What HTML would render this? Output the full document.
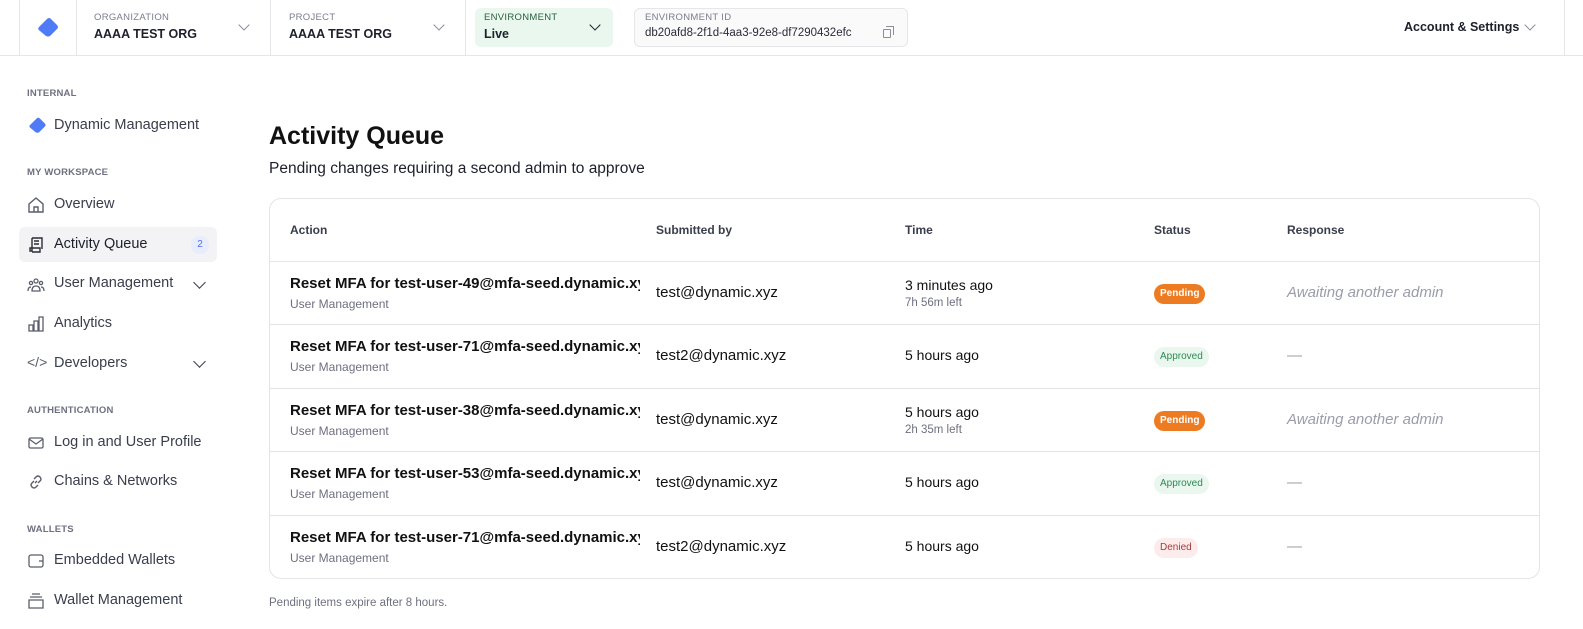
<!DOCTYPE html>
<html><head><meta charset="utf-8"><style>
*{box-sizing:border-box;margin:0;padding:0}
body{width:1583px;height:629px;overflow:hidden;background:#fff;font-family:"Liberation Sans",sans-serif;color:#111;position:relative}
.hdr{position:absolute;left:0;top:0;width:1583px;height:56px;border-bottom:1px solid #e6e6ea}
.vl{position:absolute;top:0;height:56px;width:1px;background:#e6e6ea}
.lbl{position:absolute;font-size:9.5px;color:#7a7d8c;letter-spacing:.3px}
.val{position:absolute;font-size:12.5px;font-weight:bold;color:#1d1f2b}
.chev{position:absolute;width:8px;height:8px;border-right:1.5px solid #8a8d9a;border-bottom:1.5px solid #8a8d9a;transform:rotate(45deg)}
.side{position:absolute;left:0;top:56px;width:240px}
.sec{position:absolute;left:27px;font-size:9.5px;font-weight:bold;color:#6e7080;letter-spacing:.2px}
.it{position:absolute;left:54px;font-size:14.5px;color:#3a3d4c}
.ic{position:absolute;left:27px;width:18px;height:18px}
.main h1{position:absolute;left:269px;top:122px;font-size:25px;font-weight:bold;color:#111}
.sub{position:absolute;left:269px;top:160px;font-size:15.5px;color:#1d1f2b}
.tbl{position:absolute;left:269px;top:198px;width:1271px;height:381px;border:1px solid #e4e4e8;border-radius:12px;overflow:hidden}
.th{position:absolute;top:24px;font-size:12px;font-weight:bold;color:#3a3d4c}
.row{position:absolute;left:0;width:1271px;height:63px;border-top:1px solid #e4e4e8}
.a{position:absolute;left:20px;top:13px;width:350px;overflow:hidden;white-space:nowrap;font-size:15px;font-weight:bold;color:#111}
.a2{position:absolute;left:20px;top:35px;font-size:12px;color:#6e7080}
.s{position:absolute;left:386px;top:22px;font-size:15px;color:#111}
.t{position:absolute;left:635px;top:15px;font-size:14px;color:#111}
.t.c{top:22px}
.t2{position:absolute;left:635px;top:35px;font-size:11.5px;color:#6e7080}
.b{position:absolute;left:884px;top:22px;height:20px;border-radius:10px;font-size:10px;line-height:20px;padding:0 6px}
.p{background:#ec7b22;color:#fff;font-weight:bold}
.ap{background:#e9f7ef;color:#2f8a55}
.dn{background:#fdecec;color:#a33b3b}
.r{position:absolute;left:1017px;top:22px;font-size:15px;color:#9a9cab;font-style:italic}
.d{position:absolute;left:1017px;top:22px;font-size:15px;color:#9a9cab}
</style></head><body>
<div class="hdr">
<div class="vl" style="left:19px"></div><div class="vl" style="left:76px"></div><div class="vl" style="left:270px"></div><div class="vl" style="left:465px"></div><div class="vl" style="left:1564px"></div>
<svg style="position:absolute;left:35px;top:16px" width="25" height="22" viewBox="0 0 25 22"><path d="M4 11 L12 3 Q14 1 16 3 L22 9 Q24 11 22 13 L15 20 Q13 21 11 20 L5 15 Q2 13 4 11Z" fill="#4f7bf7"/></svg>
<div class="lbl" style="left:94px;top:12px">ORGANIZATION</div><div class="val" style="left:94px;top:27px">AAAA TEST ORG</div><div class="chev" style="left:240px;top:21px"></div>
<div class="lbl" style="left:289px;top:12px">PROJECT</div><div class="val" style="left:289px;top:27px">AAAA TEST ORG</div><div class="chev" style="left:435px;top:21px"></div>
<div style="position:absolute;left:475px;top:8px;width:138px;height:39px;background:#e9f7ef;border-radius:6px"></div>
<div class="lbl" style="left:484px;top:12px;color:#2b5e3d">ENVIRONMENT</div><div class="val" style="left:484px;top:27px">Live</div><div class="chev" style="left:591px;top:21px;border-color:#1d1f2b"></div>
<div style="position:absolute;left:634px;top:8px;width:274px;height:39px;border:1px solid #e6e6ea;border-radius:6px;background:#fafafb"></div>
<div class="lbl" style="left:645px;top:12px">ENVIRONMENT ID</div><div style="position:absolute;left:645px;top:27px;font-size:11.5px;color:#2a2c38">db20afd8-2f1d-4aa3-92e8-df7290432efc</div>
<div style="position:absolute;left:883px;top:29px;width:8px;height:9px;border:1.2px solid #8a8d9a;border-radius:1px"></div><div style="position:absolute;left:886px;top:26px;width:8px;height:9px;border-top:1.2px solid #8a8d9a;border-right:1.2px solid #8a8d9a"></div>
<div class="val" style="left:1404px;top:20px;font-size:12.5px">Account &amp; Settings</div><div class="chev" style="left:1526px;top:21px"></div>
</div>
<div class="sec" style="top:88px">INTERNAL</div>
<svg style="position:absolute;left:26px;top:116px" width="22" height="18" viewBox="0 0 25 22"><path d="M4 11 L12 3 Q14 1 16 3 L22 9 Q24 11 22 13 L15 20 Q13 21 11 20 L5 15 Q2 13 4 11Z" fill="#4f7bf7"/></svg>
<div class="it" style="top:117px">Dynamic Management</div>
<div class="sec" style="top:167px">MY WORKSPACE</div>
<svg class="ic" style="top:196px" viewBox="0 0 18 18" fill="none" stroke="#5a5d6c" stroke-width="1.4"><path d="M2 8 L9 2 L16 8 V16 H2Z M7 16 V11 H11 V16"/></svg>
<div class="it" style="top:196px">Overview</div>
<div style="position:absolute;left:19px;top:227px;width:198px;height:35px;background:#f3f3f5;border-radius:6px"></div>
<svg class="ic" style="top:236px" viewBox="0 0 18 18" fill="none" stroke="#2a2c38" stroke-width="1.4"><path d="M5 2 H15 V13 M5 2 V15 H3 V12 H13 V16 H5 M7 5 H12 M7 8 H12"/></svg>
<div class="it" style="top:236px;color:#1d1f2b">Activity Queue</div>
<div style="position:absolute;left:191px;top:236px;width:18px;height:18px;border-radius:9px;background:#e8edfd;color:#4f6ff0;font-size:10px;text-align:center;line-height:18px">2</div>
<svg class="ic" style="top:276px" viewBox="0 0 18 18" fill="none" stroke="#5a5d6c" stroke-width="1.3"><circle cx="9" cy="5" r="2"/><circle cx="4" cy="7" r="1.6"/><circle cx="14" cy="7" r="1.6"/><path d="M5 15 Q5 10 9 10 Q13 10 13 15Z M1 15 Q1 11 4 11 M17 15 Q17 11 14 11"/></svg>
<div class="it" style="top:275px">User Management</div><div class="chev" style="left:195px;top:278px;width:9px;height:9px;border-color:#3a3d4c"></div>
<svg class="ic" style="top:315px" viewBox="0 0 18 18" fill="none" stroke="#5a5d6c" stroke-width="1.3"><path d="M2 16 V10 H6 V16Z M7 16 V6 H11 V16Z M12 16 V2 H16 V16Z"/></svg>
<div class="it" style="top:315px">Analytics</div>
<div style="position:absolute;left:27px;top:354px;font-size:14px;color:#5a5d6c">&lt;/&gt;</div>
<div class="it" style="top:355px">Developers</div><div class="chev" style="left:195px;top:357px;width:9px;height:9px;border-color:#3a3d4c"></div>
<div class="sec" style="top:405px">AUTHENTICATION</div>
<svg class="ic" style="top:434px" viewBox="0 0 18 18" fill="none" stroke="#5a5d6c" stroke-width="1.3"><rect x="2" y="4" width="14" height="10" rx="1.5"/><path d="M2 5 L9 10 L16 5"/></svg>
<div class="it" style="top:434px">Log in and User Profile</div>
<svg class="ic" style="top:473px" viewBox="0 0 18 18" fill="none" stroke="#5a5d6c" stroke-width="1.4"><path d="M8 10 L10 8 M7 6 L9 4 Q11 2 13 4 Q15 6 13 8 L11 10 M11 12 L9 14 Q7 16 5 14 Q3 12 5 10 L7 8"/></svg>
<div class="it" style="top:473px">Chains &amp; Networks</div>
<div class="sec" style="top:524px">WALLETS</div>
<svg class="ic" style="top:552px" viewBox="0 0 18 18" fill="none" stroke="#5a5d6c" stroke-width="1.3"><rect x="2" y="3" width="14" height="12" rx="2"/><path d="M12 9 H16"/></svg>
<div class="it" style="top:552px">Embedded Wallets</div>
<svg class="ic" style="top:592px" viewBox="0 0 18 18" fill="none" stroke="#5a5d6c" stroke-width="1.3"><path d="M5 2 H13 M3 5 H15 M2 8 H16 V16 H2Z"/></svg>
<div class="it" style="top:592px">Wallet Management</div>
<div class="main"><h1>Activity Queue</h1><div class="sub">Pending changes requiring a second admin to approve</div></div>
<div class="tbl">
<div class="th" style="left:20px">Action</div><div class="th" style="left:386px">Submitted by</div><div class="th" style="left:635px">Time</div><div class="th" style="left:884px">Status</div><div class="th" style="left:1017px">Response</div>
<div class="row" style="top:62px"><div class="a">Reset MFA for test-user-49@mfa-seed.dynamic.xyz</div><div class="a2">User Management</div><div class="s">test@dynamic.xyz</div><div class="t">3 minutes ago</div><div class="t2">7h 56m left</div><div class="b p">Pending</div><div class="r">Awaiting another admin</div></div>
<div class="row" style="top:125px"><div class="a">Reset MFA for test-user-71@mfa-seed.dynamic.xyz</div><div class="a2">User Management</div><div class="s">test2@dynamic.xyz</div><div class="t c">5 hours ago</div><div class="b ap">Approved</div><div class="d">—</div></div>
<div class="row" style="top:189px"><div class="a">Reset MFA for test-user-38@mfa-seed.dynamic.xyz</div><div class="a2">User Management</div><div class="s">test@dynamic.xyz</div><div class="t">5 hours ago</div><div class="t2">2h 35m left</div><div class="b p">Pending</div><div class="r">Awaiting another admin</div></div>
<div class="row" style="top:252px"><div class="a">Reset MFA for test-user-53@mfa-seed.dynamic.xyz</div><div class="a2">User Management</div><div class="s">test@dynamic.xyz</div><div class="t c">5 hours ago</div><div class="b ap">Approved</div><div class="d">—</div></div>
<div class="row" style="top:316px"><div class="a">Reset MFA for test-user-71@mfa-seed.dynamic.xyz</div><div class="a2">User Management</div><div class="s">test2@dynamic.xyz</div><div class="t c">5 hours ago</div><div class="b dn">Denied</div><div class="d">—</div></div>
</div>
<div style="position:absolute;left:269px;top:597px;font-size:11.5px;color:#6e7080">Pending items expire after 8 hours.</div>
</body></html>
